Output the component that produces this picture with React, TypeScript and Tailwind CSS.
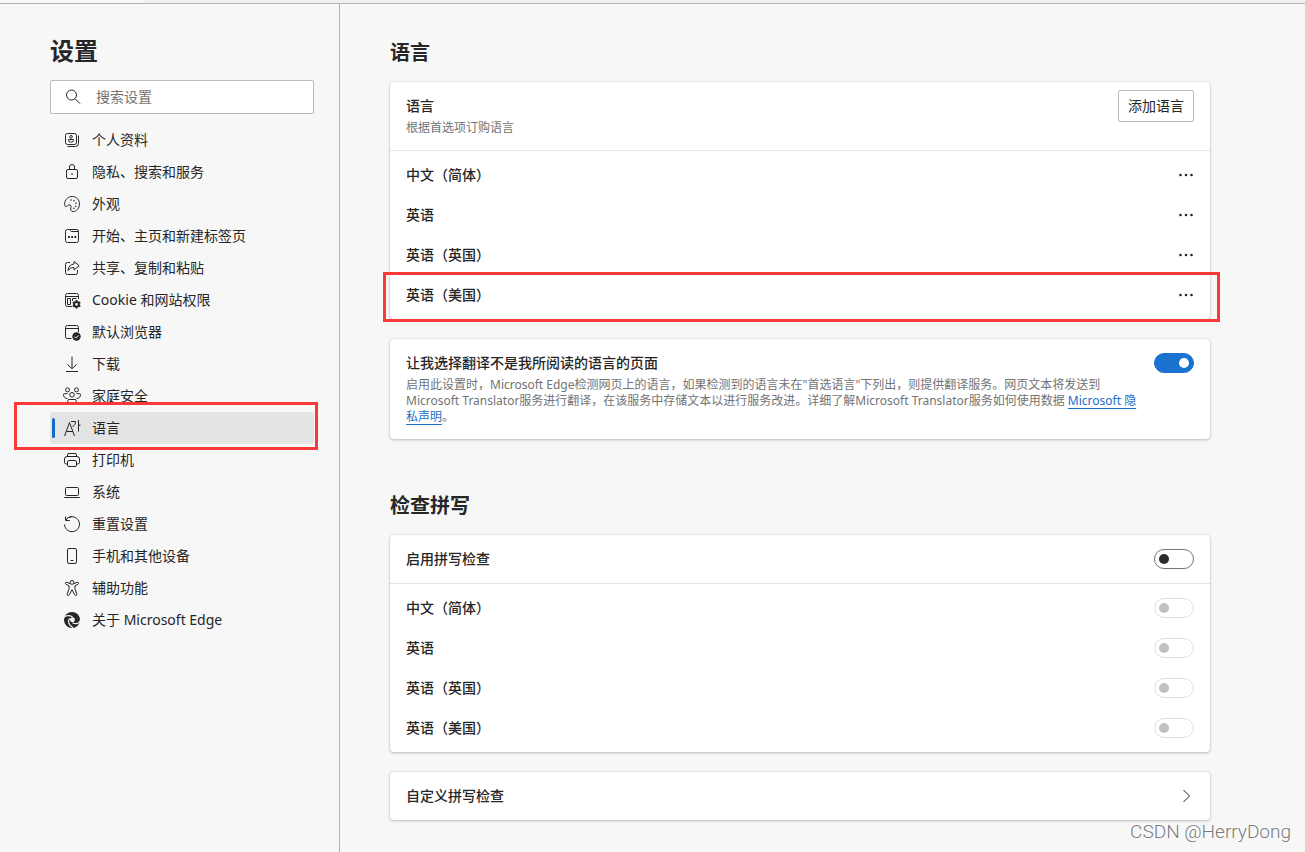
import React, { useState } from 'react';

interface NavItem {
  id: string;
  label: string;
  icon: React.ReactNode;
}

interface Language {
  code: string;
  name: string;
}

const languages: Language[] = [
  { code: 'zh-CN', name: '中文（简体）' },
  { code: 'en', name: '英语' },
  { code: 'en-GB', name: '英语（英国）' },
  { code: 'en-US', name: '英语（美国）' },
];

const navItems: NavItem[] = [
  {
    id: 'profiles',
    label: '个人资料',
    icon: (
      <>
        <rect x="1.5" y="1.5" width="11" height="11" rx="2" />
        <path d="M14.500 3.500v8a3 3 0 0 1-3 3h-8" />
        <circle cx="7" cy="4.800" r="1.300" />
        <path d="M4.500 7.500h5v.8a1.700 1.700 0 0 1-1.700 1.700H6.200a1.700 1.700 0 0 1-1.700-1.700z" />
      </>
    ),
  },
  {
    id: 'privacy',
    label: '隐私、搜索和服务',
    icon: (
      <>
        <rect x="2.500" y="5.500" width="11" height="9" rx="1.500" />
        <path d="M5.500 5.500V3a2.500 2.500 0 0 1 5 0v2.500" />
        <rect x="7.300" y="9.300" width="1.500" height="1.500" fill="currentColor" stroke="none" />
      </>
    ),
  },
  {
    id: 'appearance',
    label: '外观',
    icon: (
      <>
        <path d="M1 10C-.6 6 2.700.5 8.200.5c4.400 0 7.300 3.400 7.300 7.400 0 4.500-3.200 7.600-6.300 7.600-2.400 0-2.900-2-2.300-4 .5-1.800-.4-2.900-1.900-2.600C3.400 9.200 2 11.800 1 10z" />
        <g fill="currentColor" stroke="none">
          <circle cx="7" cy="4" r=".8" />
          <circle cx="10" cy="4.800" r=".8" />
          <circle cx="12" cy="7.300" r=".8" />
          <circle cx="11.800" cy="10.200" r=".8" />
          <circle cx="9.800" cy="12.300" r=".8" />
        </g>
      </>
    ),
  },
  {
    id: 'start',
    label: '开始、主页和新建标签页',
    icon: (
      <>
        <rect x="1.500" y="1.500" width="13" height="13" rx="2" />
        <path d="M6.500 1.500v1a1 1 0 0 0 1 1h7" />
        <path d="M4 9h1.800M7.200 9H9M10.400 9h1.800" strokeWidth="1.800" />
      </>
    ),
  },
  {
    id: 'share',
    label: '共享、复制和粘贴',
    icon: (
      <>
        <path d="M6 2.500H3.500a2 2 0 0 0-2 2v8a2 2 0 0 0 2 2h8a2 2 0 0 0 2-2V10" />
        <path d="M10 1.500l5.200 4.200L10 10V7.500C7.300 7.400 5.500 8.300 4 10.500 4.300 6.700 6.500 4.300 10 4z" />
      </>
    ),
  },
  {
    id: 'cookies',
    label: 'Cookie 和网站权限',
    icon: (
      <>
        <path d="M8 14.500H3.500a2 2 0 0 1-2-2v-9a2 2 0 0 1 2-2h9a2 2 0 0 1 2 2V7" />
        <path d="M1.500 4.500h13M3.500 6.500h3v6h-3zM8.500 9V6.500h4" />
        <circle cx="12.500" cy="12.300" r="2.400" strokeWidth="2" />
        <path d="M12.500 8v1.500M12.500 15v1.600M8.800 10.200l1.300.7M15 13.600l1.300.8M8.800 14.400l1.300-.8M15 10.900l1.300-.7" strokeWidth="1.800" />
      </>
    ),
  },
  {
    id: 'default-browser',
    label: '默认浏览器',
    icon: (
      <>
        <path d="M7.500 14.500h-4a2 2 0 0 1-2-2v-9a2 2 0 0 1 2-2h9a2 2 0 0 1 2 2V8M1.500 4.500h13" />
        <circle cx="12.500" cy="12.500" r="4.200" fill="currentColor" stroke="none" />
        <path d="M10.500 12.700l1.300 1.300 2.700-2.700" stroke="#f7f7f7" />
      </>
    ),
  },
  {
    id: 'downloads',
    label: '下载',
    icon: (
      <>
        <path d="M8 .5v12M3.500 8.300L8 12.800l4.500-4.500" />
        <path d="M2 15.500h12" />
      </>
    ),
  },
  {
    id: 'family',
    label: '家庭安全',
    icon: (
      <>
        <circle cx="3.500" cy="1.900" r="2" />
        <circle cx="12.500" cy="1.900" r="2" />
        <circle cx="8" cy="6.800" r="2.300" />
        <path d="M3.500 10.500C1 10.500-.5 9-.5 6.500a.8.800 0 0 1 .8-.8h3.200M12.500 10.500c2.500 0 4-1.500 4-4a.8.800 0 0 0-.8-.8h-3.200" />
        <path d="M3.800 15.500v-3a1 1 0 0 1 1-1h6.400a1 1 0 0 1 1 1v3" />
      </>
    ),
  },
  {
    id: 'languages',
    label: '语言',
    icon: (
      <>
        <path d="M.6 16L5.500 2.500 10.500 16M2.400 11.500h6.500" />
        <path d="M7 1.500h4.500c0 2.400-1 4-3 5" />
        <path d="M14.500 0v11.500M14.500 5.200h2" />
      </>
    ),
  },
  {
    id: 'printers',
    label: '打印机',
    icon: (
      <>
        <path d="M3.500 12H2.300A1.800 1.800 0 0 1 .5 10.200V7a2.500 2.500 0 0 1 2.500-2.500h10A2.500 2.500 0 0 1 15.500 7v3.200a1.800 1.800 0 0 1-1.800 1.800h-1.200" />
        <path d="M3.500 4.500V3A1.500 1.500 0 0 1 5 1.500h6A1.500 1.500 0 0 1 12.500 3v1.500" />
        <rect x="3.500" y="8.500" width="9" height="6" rx="1.500" />
      </>
    ),
  },
  {
    id: 'system',
    label: '系统',
    icon: (
      <>
        <rect x="1.500" y="3.500" width="13" height="8" rx="1" />
        <path d="M.3 13.500h15.500" />
      </>
    ),
  },
  {
    id: 'reset',
    label: '重置设置',
    icon: (
      <>
        <path d="M.5 8.500A7.500 7.500 0 1 0 2 3.700" />
        <path d="M2 3.900A7.500 7.500 0 0 1 8 .5" />
        <path d="M1.500.5v4h4.300" />
      </>
    ),
  },
  {
    id: 'devices',
    label: '手机和其他设备',
    icon: (
      <>
        <rect x="3.500" y=".5" width="9" height="15" rx="1.500" />
        <path d="M6.500 12.500h3" />
      </>
    ),
  },
  {
    id: 'accessibility',
    label: '辅助功能',
    icon: (
      <>
        <circle cx="8" cy="2.400" r="1.900" />
        <path d="M6.200 3.700L3 2.300c-1.500-.6-2.300 1.300-1 2L5 5.800v3.400L3.200 14c-.5 1.600 1.500 2.200 2.100.8L8 9.700l2.700 5.100c.6 1.400 2.600.8 2.100-.8L11 9.200V5.800l3-1.500c1.300-.7.500-2.600-1-2L9.800 3.700" />
      </>
    ),
  },
  {
    id: 'about',
    label: '关于 Microsoft Edge',
    icon: (
      <>
        <circle cx="8" cy="8" r="8" fill="currentColor" stroke="none" />
        <g stroke="#f7f7f7" strokeWidth="1.200">
          <path d="M-.2 5.200C2.500 3 7 3.300 8.500 5.200" />
          <path d="M5.500 6.300c-2 2.700-.7 7.200 3.500 9.500" />
          <path d="M16 8.500c-.5 3-4.500 4.200-7.500 2.200" />
        </g>
        <path d="M7.700 5.400c1.900-.4 3.300.8 3.200 2.200 0 .9-.8 1.200-.4 1.700-1.500 1.700-4.500.6-4.500-1.500 0-1.200.7-2.100 1.700-2.400z" fill="#f7f7f7" stroke="none" />
      </>
    ),
  },
];

interface IconProps {
  children: React.ReactNode;
}

const Icon: React.FC<IconProps> = ({ children }) => (
  <svg
    viewBox="0 0 16 16"
    className="size-4 shrink-0 overflow-visible"
    fill="none"
    stroke="currentColor"
    strokeLinejoin="round"
    aria-hidden="true"
  >
    {children}
  </svg>
);

interface ToggleProps {
  id: string;
  checked: boolean;
  disabled?: boolean;
  onChange?: (checked: boolean) => void;
}

const Toggle: React.FC<ToggleProps> = ({ id, checked, disabled, onChange }) => (
  <input
    id={id}
    type="checkbox"
    role="switch"
    checked={checked}
    disabled={disabled}
    onChange={e => onChange?.(e.target.checked)}
    className="flex h-5 w-10 shrink-0 appearance-none items-center rounded-full border border-[#767676] bg-white px-1 before:size-2.5 before:rounded-full before:bg-[#2b2b2b] checked:justify-end checked:border-[#1a73d1] checked:bg-[#1a73d1] checked:before:bg-white disabled:border-[#dedede] disabled:before:bg-[#c1c1c1]"
  />
);

interface CardProps {
  children: React.ReactNode;
  className?: string;
}

const Card: React.FC<CardProps> = ({ children, className = '' }) => (
  <section className={`rounded bg-white shadow-[0_0_2px_rgba(0,0,0,0.14),0_1px_3px_rgba(0,0,0,0.22)] ${className}`}>
    {children}
  </section>
);

// Red frame drawn over the item being pointed out
const Highlight: React.FC<{ className: string }> = ({ className }) => (
  <span className={`pointer-events-none absolute z-10 border-3 border-[#fa3838] ${className}`} />
);

const Sidebar: React.FC = () => {
  const [active, setActive] = useState('languages');
  const [query, setQuery] = useState('');

  return (
    <aside className="w-[340px] shrink-0 border-r border-[#b4b4b4] pt-[31px] pr-[25px] pl-[50px]">
      <h1 className="text-2xl leading-8 font-bold">设置</h1>
      <div className="mt-[13px] flex h-[34px] items-center gap-[15px] rounded-xs border border-[#bababa] bg-white pl-3.5">
        <Icon>
          <circle cx="6.500" cy="6" r="5" />
          <path d="M10 9.700l5 5" />
        </Icon>
        <input
          type="search"
          aria-label="搜索设置"
          placeholder="搜索设置"
          value={query}
          onChange={e => setQuery(e.target.value)}
          className="min-w-0 flex-1 text-sm outline-none placeholder:text-[#737373]"
        />
      </div>
      <nav className="mt-2.5">
        <ul>
          {navItems.map(item => (
            <li key={item.id} className="relative">
              <a
                href={`#${item.id}`}
                onClick={() => setActive(item.id)}
                className={`flex h-8 items-center gap-3 rounded-xs pl-3.5 text-sm ${item.id === active ? 'bg-[#e4e4e4]' : ''}`}
              >
                <Icon>{item.icon}</Icon>
                {item.label}
              </a>
              {item.id === active && (
                <span className="absolute top-1.5 left-0.5 h-5 w-[3px] rounded-full bg-[#1569c7]" />
              )}
              {item.id === 'languages' && <Highlight className="-top-2.5 -right-1 -bottom-1.5 -left-9" />}
            </li>
          ))}
        </ul>
      </nav>
    </aside>
  );
};

const LanguageSettings: React.FC = () => {
  const [offerTranslate, setOfferTranslate] = useState(true);
  const [spellcheck, setSpellcheck] = useState(false);

  return (
    <main className="min-w-0 flex-1 px-[50px] pt-[35px] pb-8">
      <div className="max-w-[820px]">
        <h2 className="mb-[15px] text-xl leading-7 font-bold">语言</h2>
        <Card>
          <div className="flex items-start justify-between border-b border-[#e5e5e5] px-4">
            <div className="py-3.5">
              <h3 className="text-sm leading-5 font-medium">语言</h3>
              <p className="mt-1 text-xs text-[#737373]">根据首选项订购语言</p>
            </div>
            <button className="mt-2 h-8 rounded-xs border border-[#bababa] px-[9px] text-sm">添加语言</button>
          </div>
          <ul className="py-1">
            {languages.map(lang => (
              <li key={lang.code} className="relative flex h-10 items-center justify-between px-4">
                <span className="text-sm font-medium">{lang.name}</span>
                <button aria-label={`${lang.name} 更多操作`}>
                  <Icon>
                    <g fill="currentColor" stroke="none">
                      <circle cx="2.500" cy="8" r="1.300" />
                      <circle cx="8" cy="8" r="1.300" />
                      <circle cx="13.500" cy="8" r="1.300" />
                    </g>
                  </Icon>
                </button>
                {lang.code === 'en-US' && <Highlight className="-top-[3px] -right-2.5 -bottom-[7px] -left-[7px]" />}
              </li>
            ))}
          </ul>
        </Card>

        <Card className="mt-5 flex items-start justify-between px-4 py-3.5">
          <div className="max-w-[740px]">
            <label htmlFor="offer-translate" className="block text-sm leading-5 font-medium">
              让我选择翻译不是我所阅读的语言的页面
            </label>
            <p className="mt-1 text-xs text-[#737373]">
              启用此设置时，Microsoft Edge检测网页上的语言，如果检测到的语言未在"首选语言"下列出，则提供翻译服务。网页文本将发送到 Microsoft
              Translator服务进行翻译，在该服务中存储文本以进行服务改进。详细了解Microsoft Translator服务如何使用数据{' '}
              <a href="#privacy-statement" className="text-[#1a6fcc] underline underline-offset-3">
                Microsoft 隐私声明
              </a>
              。
            </p>
          </div>
          <Toggle id="offer-translate" checked={offerTranslate} onChange={setOfferTranslate} />
        </Card>

        <h2 className="mt-[53px] mb-[15px] text-xl leading-7 font-bold">检查拼写</h2>
        <Card>
          <div className="flex items-center justify-between border-b border-[#e5e5e5] px-4 py-3.5">
            <label htmlFor="spellcheck" className="text-sm leading-5 font-medium">启用拼写检查</label>
            <Toggle id="spellcheck" checked={spellcheck} onChange={setSpellcheck} />
          </div>
          <ul className="py-1">
            {languages.map(lang => (
              <li key={lang.code} className="flex h-10 items-center justify-between px-4">
                <label htmlFor={`spell-${lang.code}`} className="text-sm font-medium">{lang.name}</label>
                <Toggle id={`spell-${lang.code}`} checked={false} disabled={!spellcheck} />
              </li>
            ))}
          </ul>
        </Card>

        <Card className="mt-5">
          <a href="#dictionary" className="flex h-12 items-center justify-between px-4 text-sm font-medium">
            自定义拼写检查
            <Icon>
              <path d="M5.500 2l6 6-6 6" />
            </Icon>
          </a>
        </Card>
      </div>
    </main>
  );
};

const App: React.FC = () => (
  <div className="relative flex min-h-screen flex-col bg-[#f7f7f7] font-['Noto_Sans','Noto_Sans_CJK_SC',sans-serif] text-[#262626]">
    <div className="flex h-1 border-b border-[#b4b4b4] bg-[#efefef]">
      <div className="w-36 bg-[#f7f7f7]" />
    </div>
    <div className="flex flex-1">
      <Sidebar />
      <LanguageSettings />
    </div>
    <div className="absolute right-3.5 bottom-1.5 font-['Roboto',sans-serif] text-[19px] leading-7 font-light text-[#7a7a7a] [text-shadow:-1px_-1px_0_#fff]">
      CSDN @HerryDong
    </div>
  </div>
);

export default App;
